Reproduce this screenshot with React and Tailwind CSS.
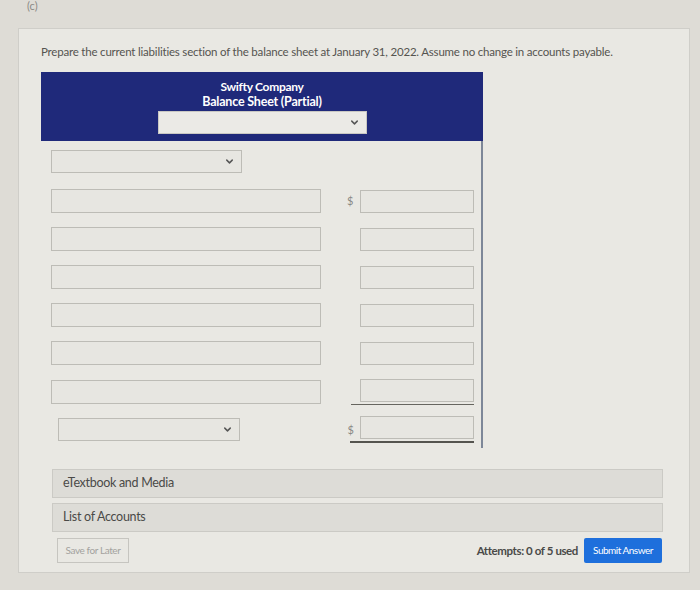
import { ChevronDown } from 'lucide-react'

const lines = [0, 1, 2, 3, 4, 5]

function Select({ className }) {
  return (
    <div className={`flex h-[23px] items-center justify-end border border-[#bdbcb6] bg-[#e7e6e1] pr-[6px] ${className}`}>
      <ChevronDown size={11} strokeWidth={3.2} className="text-[#555]" />
    </div>
  )
}

function App() {
  return (
    <div className="min-h-[590px] w-[700px] bg-[#dedcd6] font-['Lato','Liberation_Sans',sans-serif] text-[#4a4a48]">
      <div className="h-[28px] pl-[27px] text-[11px] leading-[11px] text-[#8b8a86]">
        (c)
      </div>

      <div className="ml-[18px] mr-[10px] h-[545px] border border-[#cfcec9] bg-[#e9e8e3] pl-[22px] pr-[26px]">
        <p className="mt-[14px] text-[11.5px] tracking-[-0.2px] text-[#555450]">
          Prepare the current liabilities section of the balance sheet at January 31, 2022. Assume no change in accounts payable.
        </p>

        <div className="mt-[12px] w-[442px]">
          <div className="flex h-[69px] flex-col items-center bg-[#1f297a] pt-[7px] text-white">
            <p className="text-[12px] font-bold leading-[15px] tracking-[-0.3px]">Swifty Company</p>
            <p className="text-[12.5px] font-bold leading-[16px] tracking-[-0.2px]">Balance Sheet (Partial)</p>
            <div className="mt-[1px] flex h-[23px] w-[209px] items-center justify-end border border-[#c9c8c3] bg-[#ebeae6] pr-[6px]">
              <ChevronDown size={11} strokeWidth={3.2} className="text-[#555]" />
            </div>
          </div>

          <div className="h-[307px] border-r-2 border-[#7d8798] pl-[10px] pr-[7px] pt-[9px]">
            <Select className="w-[191px]" />
            <div className="mt-[16px] flex flex-col gap-[14px]">
              {lines.map((i) => (
                <div key={i} className="flex items-center">
                  <div className="h-[24px] w-[270px] border border-[#bdbcb6] bg-[#e7e6e1]" />
                  <span className="ml-[26px] w-[13px] text-[11px] text-[#8a8985]">{i === 0 ? '$' : ''}</span>
                  <div className={i === 5 ? 'border-b-[1.5px] border-[#66655f] pb-[2px] pl-[9px] -ml-[9px]' : ''}>
                    <div className="h-[23px] w-[114px] border border-[#bdbcb6] bg-[#e7e6e1]" />
                  </div>
                </div>
              ))}
              <div className="-mt-[3px] flex items-center">
                <Select className="w-[188px] ml-[7px]" />
                <span className="ml-[107px] w-[13px] text-[11px] text-[#8a8985]">$</span>
                <div className="border-b-[2.5px] border-[#55544f] pb-[2px] pl-[10px] -ml-[10px]">
                  <div className="h-[23px] w-[114px] border border-[#bdbcb6] bg-[#e7e6e1]" />
                </div>
              </div>
            </div>
          </div>
        </div>

        <div className="ml-[11px]">
          <div className="mt-[21px] flex h-[29px] items-center border border-[#cbcac5] bg-[#dddcd7] pl-[10px] text-[12.5px] tracking-[-0.3px] text-[#4a4a48]">
            eTextbook and Media
          </div>
          <div className="mt-[5px] flex h-[29px] items-center border border-[#cbcac5] bg-[#dddcd7] pl-[10px] text-[12.5px] tracking-[-0.3px] text-[#4a4a48]">
            List of Accounts
          </div>

          <div className="mt-[6px] flex items-center justify-between pl-[5px]">
            <button className="h-[25px] w-[72px] border border-[#c6c5c0] bg-[#e9e8e3] text-[10px] tracking-[-0.4px] text-[#a3a29e]">
              Save for Later
            </button>
            <div className="flex items-center gap-[6px] pr-[1px]">
              <span className="text-[11.5px] font-bold tracking-[-0.4px] text-[#4a4a48]">Attempts: 0 of 5 used</span>
              <button className="h-[25px] w-[78px] rounded-[2px] bg-[#1e6fdc] text-[10px] tracking-[-0.5px] text-white">
                Submit Answer
              </button>
            </div>
          </div>
        </div>
      </div>
    </div>
  )
}

export default App
